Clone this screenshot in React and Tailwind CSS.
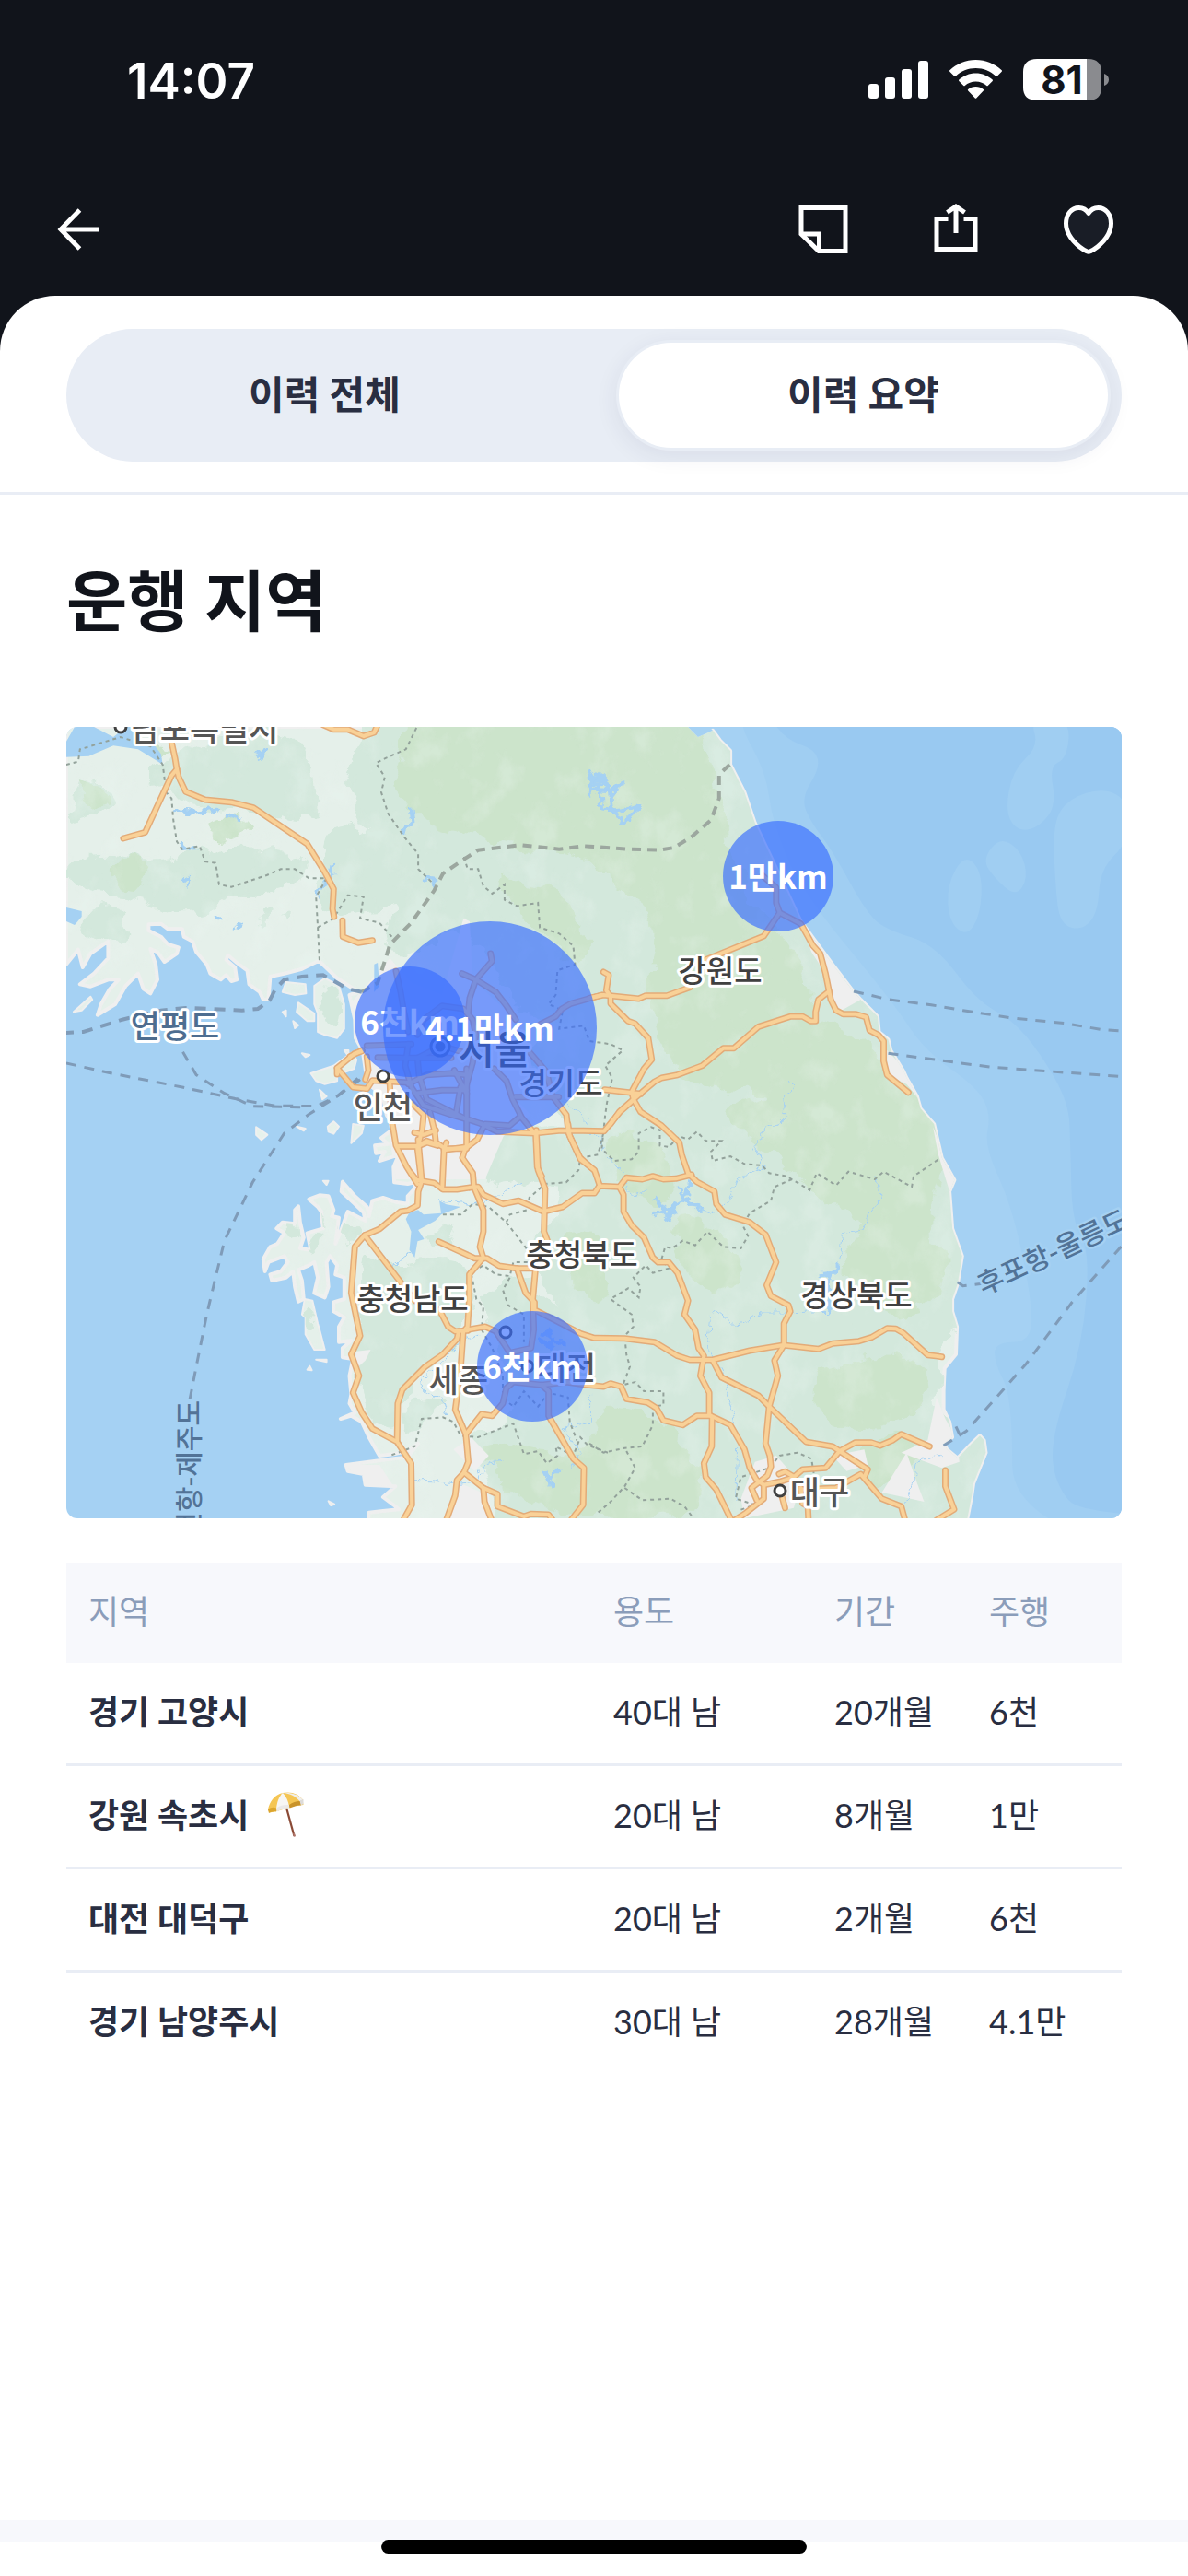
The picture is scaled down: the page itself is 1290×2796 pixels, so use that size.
import React from "react";

/* ---------- Map geometry ---------- */

// Survey sheets: each sheet has its own origin and unit size on the map.
const SX = 600 / 1568;
const S3 = 1 / 3;
const SHEETS = {
  nw: [-12, -9, SX, S3],
  ne: [568, -9, SX, S3],
  sw: [-12, 421, SX, S3],
  se: [568, 421, SX, S3],
  m: [308, 191, S3, S3],
};

// "nw 10,20 30,40 ne 5,5" -> [[x, y], ...] in map units
function points(text) {
  let sheet = SHEETS.nw;
  const out = [];
  text.split(/\s+/).forEach((token) => {
    if (!token) return;
    if (SHEETS[token]) {
      sheet = SHEETS[token];
      return;
    }
    const [x, y] = token.split(",").map(Number);
    out.push([
      Math.round((sheet[0] + x * sheet[2]) * 10) / 10,
      Math.round((sheet[1] + y * sheet[3]) * 10) / 10,
    ]);
  });
  return out;
}

const line = (text) => "M" + points(text).map((p) => p.join(" ")).join("L");
const area = (text) => line(text) + "Z";

// Closed outline whose corners are rounded through the edge midpoints
function blob(text) {
  const p = points(text);
  const mid = (a, b) => [(a[0] + b[0]) / 2, (a[1] + b[1]) / 2];
  const start = mid(p[p.length - 1], p[0]);
  let d = `M${start.join(" ")}`;
  p.forEach((pt, i) => {
    d += `Q${pt.join(" ")} ${mid(pt, p[(i + 1) % p.length]).join(" ")}`;
  });
  return d + "Z";
}

const LAND =
  "nw 31,27 31,800 65,752 78,810 100,765 150,725 150,780 110,830 70,865 100,872 150,850 180,850 155,880 130,930 120,965 170,930 200,870 235,830 250,880 270,895 290,850 285,800 270,750 290,760 310,792 345,765 350,745 320,735 300,710 265,690 265,670 300,668 320,685 360,685 365,710 390,725 400,760 430,800 440,830 470,850 485,835 500,855 515,850 510,810 485,785 490,770 515,795 545,820 550,865 580,890 590,915 605,915 610,840 650,830 700,815 748,788 800,845 860,890 835,900 850,980 852,1040 872,1080 885,1180 900,1200 930,1230 940,1290 " +
  "sw 950,20 955,50 925,75 945,95 907,100 910,125 935,120 920,150 975,130 960,170 962,220 1000,225 1020,220 1020,240 1000,265 1000,290 970,285 930,270 900,280 890,330 885,300 850,265 815,218 812,250 850,290 875,318 880,345 830,315 810,380 795,420 805,335 785,330 790,310 775,265 750,262 720,275 745,300 755,315 760,370 715,385 725,440 695,435 705,400 695,350 690,298 680,310 680,355 645,350 628,370 650,385 630,420 610,430 590,470 595,510 605,480 650,460 660,480 640,510 610,520 615,540 655,530 675,510 680,560 690,608 705,600 700,540 690,505 720,490 735,480 745,530 735,580 765,595 775,560 770,480 780,460 800,490 795,520 820,530 820,600 790,610 790,640 820,660 805,690 805,740 840,735 815,760 815,790 845,795 835,850 840,910 835,940 850,970 810,990 840,980 870,1000 890,1050 920,1110 960,1105 1000,1095 1030,1070 1000,1115 960,1120 825,1140 830,1160 875,1170 880,1205 965,1210 930,1245 965,1275 975,1285 930,1290 890,1295 888,1330 " +
  "se 1070,1330 1085,1240 1090,1200 1125,1100 1120,1060 1108,1045 1085,1070 1045,1118 1015,1090 1005,1070 1030,1050 1022,1000 1005,960 1005,900 1008,825 1040,780 1043,690 1030,640 1030,600 1045,550 1058,460 1030,370 1022,250 1036,212 1000,140 978,30 " +
  "ne 970,1310 940,1270 930,1230 900,1170 890,1145 855,1080 848,1045 822,1020 818,970 770,915 750,890 690,800 600,660 540,510 470,340 440,240 400,150 400,105 370,70 350,38 308,60 280,27";

const ISLANDS = [
  "nw 735,870 765,845 805,870 820,930 820,1010 800,1040 765,1030 745,1020 745,960 735,930",
  "nw 645,890 655,858 710,865 712,895 680,900",
  "nw 690,925 735,960 735,985 715,985 685,955",
  "nw 725,1155 790,1130 840,1088 855,1110 848,1140 800,1160 800,1180 765,1190 740,1180",
  "nw 52,955 100,905 105,915 75,950",
  "nw 750,1208 770,1230 758,1240",
  "sw 570,40 602,65 585,82 570,65",
  "sw 773,38 790,22 805,38 790,62 775,55",
  "sw 845,30 875,35 870,60 840,92",
  "sw 708,600 730,605 745,680 750,700 765,765 735,765 710,715 710,660 700,650",
  "sw 740,797 770,797 770,805",
  "sw 715,830 722,818 728,832",
  "sw 685,38 710,45 705,52",
  "sw 760,215 775,215 770,228",
  "sw 775,1258 792,1268 782,1272",
  "nw 645,955 655,950 655,970",
  "nw 675,985 690,998 680,1008",
  "nw 820,1080 832,1080 832,1100",
  "nw 700,1090 722,1095 710,1102",
];

const INLETS = [
  "nw 31,75 31,125 95,122 165,88 235,100 285,135 305,150 300,115 280,85 235,70 255,27 200,27 165,60 110,27 55,27",
  "nw 31,615 75,627 75,645 55,672 31,660",
  "sw 1110,292 1150,300 1095,325 1078,345 1030,375 1047,405 1028,412 1020,465 1005,440 1010,380 995,340 1005,318 1030,310 1045,325 1095,320 1090,280",
  "nw 905,800 915,795 920,870 905,890",
  "ne 280,27 308,60 350,38 340,27",
];

const LOWLAND_HILLS = [
  "nw 60,220 130,190 190,250 100,330 20,350",
  "nw 90,620 200,610 240,700 180,750 70,700",
  "nw 240,180 350,120 500,50 700,40 750,230 740,350 560,290 400,300",
  "nw 31,460 150,440 290,470 420,420 560,430 640,400 740,490 640,560 480,560 430,640 330,640 250,600 31,560",
  "nw 580,640 620,610 600,690",
  "nw 640,620 670,620 660,660",
  "nw 750,870 800,880 800,1010 760,1010",
  "sw 865,440 950,500 1050,480 1170,490 1200,560 1130,780 1000,870 970,1030 900,1020 850,900 870,700",
  "sw 810,330 870,380 830,420 800,420",
  "sw 750,290 780,310 770,370 745,360",
  "sw 720,390 760,380 740,450 715,440",
  "sw 650,380 690,350 690,420 640,420",
  "sw 1000,930 1110,910 1050,1000 980,1050",
  "sw 1060,380 1110,360 1150,400 1090,430",
  "sw 710,600 740,640 745,710 720,710",
];

const HIGHLAND =
  "nw 760,-60 900,-60 820,200 880,350 760,380 740,520 780,640 960,620 920,760 990,770 1130,690 1230,760 1320,960 1400,1000 1350,1100 1450,1320 " +
  "sw 1200,70 1190,160 1240,240 1360,220 1420,230 1430,330 1360,420 1380,520 1440,620 1290,520 1210,600 1240,720 1300,950 1180,1060 1210,1150 1300,1400 " +
  "se 380,1400 1180,1400 1200,1020 1080,1000 990,950 990,800 1120,600 1140,300 1100,100 ne 1020,1200 860,920 740,760 440,-60";

const FORESTS = [
  "nw 1020,-80 950,200 1020,330 1180,380 1300,430 1500,440 ne 40,520 200,640 160,800 180,980 300,1230 560,1200 se 350,0 560,150 700,330 980,460 960,300 1020,140 1000,0 ne 900,1180 740,1000 620,980 640,860 500,640 420,520 390,330 360,200 290,-80",
  "se 250,300 430,420 420,600 300,560 230,450",
  "se 700,380 980,330 1020,550 900,680 760,600",
  "se 580,850 900,760 980,900 900,1000 700,1040",
  "se 60,40 220,120 240,300 120,260 40,140",
  "se 740,1150 880,1000 940,1150 820,1230",
  "sw 1200,1050 1420,1130 1568,1020 1568,1330 1380,1290 1260,1200",
  "se 0,950 150,950 300,1100 330,1270 200,1320 0,1320",
  "nw 1210,480 1400,560 1520,640 1500,840 1380,700",
  "sw 1430,350 1568,400 1568,640 1450,560",
  "nw 60,220 120,200 170,250 80,310",
  "nw 180,450 270,470 250,560 150,540",
  "nw 420,330 520,320 580,350 500,400 430,380",
  "nw 300,60 340,120 260,110",
];

const URBAN = [
  "m 0,330 130,180 200,260 300,300 370,50 390,60 400,250 560,400 600,560 540,640 590,690 500,760 440,900 150,900 120,700 30,620",
  "se 470,1130 530,1110 600,1200 580,1280 440,1314 430,1250",
  "se 985,920 1010,990 1040,1050 1050,1130 1000,1150 885,1100 960,1060",
  "se 900,1100 930,1200 950,1260 870,1240 830,1230",
  "se 690,1110 780,1090 790,1140 730,1160",
  "ne 600,660 630,760 670,830 690,920 715,950 770,915 750,890",
  "ne 845,1080 845,1160 900,1190 935,1240 895,1140",
  "se 975,40 990,130 1022,250 1040,212",
  "sw 825,1140 880,1205 960,1210 920,1140",
  "sw 1150,1200 1230,1240 1240,1314 1110,1314",
  "sw 1130,1090 1180,1050 1230,1110 1190,1160",
  "sw 855,770 895,765 880,800 850,830",
];

const LAKES = [
  "nw 1515,160 1530,200 1520,250 nw 1530,215 1568,205 1545,180 nw 1568,230",
  "ne 0,180 15,230 60,235 100,205 ne 60,235 65,290 95,340 145,285 ne 65,300 35,292 ne 20,180 45,215",
  "nw 1010,290 1015,340 990,360 985,380",
  "nw 335,300 400,305 465,295",
  "nw 490,325 505,315 525,325",
  "nw 355,400 365,425 400,420",
  "nw 360,515 385,525 370,545",
  "nw 455,650 470,645",
  "nw 510,670 530,678",
  "nw 1045,520 1075,525 1080,560",
  "nw 575,110 600,100 575,130",
  "nw 740,580 750,560 785,500 790,470",
  "se 185,265 205,300 235,310 225,340 se 205,320 185,325 se 235,300 270,275 250,235 se 270,275 285,220 se 270,275 320,310",
  "se 650,520 690,515 705,490 se 690,515 680,545 680,640",
  "sw 1380,720 1400,700 1420,740 1450,745 sw 1400,740 1410,765 sw 1380,735 1395,750",
  "sw 1385,1155 1400,1190 1425,1160 sw 1400,1190 1410,1215",
];

const STREAMS = [
  "ne 570,1185 580,1205 550,1225 555,1280 545,1320",
  "se 555,0 545,25 500,40 470,110 495,170 420,210 390,290 360,325 320,310",
  "se 810,190 830,270 790,330 775,375 720,385 710,480",
  "se 680,640 560,645 500,645 410,685 360,640 345,650 335,760 385,860 405,960 420,1080 415,1250",
  "se 0,70 30,70 40,120 100,195 105,240 125,270 165,245",
  "sw 1090,275 1150,285 1190,295 1260,265 1320,220",
  "sw 1000,1190 1070,1190 1130,1203 1190,1195 1220,1140 1270,1125",
  "sw 1110,985 1100,930 1045,900 1040,860 1100,800 1150,735 1200,715",
  "se 1000,1108 925,1130 920,1200 895,1270",
  "sw 955,495 980,470 1010,455",
  "sw 1520,910 1520,1000 1440,1020 1490,1100 1460,1150",
  "m 690,640 770,700 775,725",
];

const ROADS = [
  "nw 330,77 340,130 345,165 350,190 370,238 425,264 500,272 562,290 715,408 765,500 790,555 787,620 791,645",
  "nw 345,165 330,185 255,370 193,390",
  "nw 815,658 816,710 860,730 900,722",
  "nw 760,20 790,35 830,35 875,57 905,45 915,20",
  "m 150,222 165,290 175,350 190,420",
  "m 458,165 463,190 410,250 390,310 385,360",
  "m 365,230 410,250 475,290 510,335 540,380",
  "m 820,300 720,328 690,345 670,370 620,395",
  "m 90,503 220,505 330,505",
  "m 55,465 130,463 200,460",
  "m 220,505 300,465 380,490",
  "m 220,430 240,380 300,335 370,345 400,380 410,430 400,520 375,610",
  "m 0,500 40,480",
  "m 55,500 60,545 50,575",
  "nw 870,1083 850,1090 800,1138 845,1200 885,1205 900,1178 1000,1185",
  "nw 800,1138 800,1158",
  "m 190,460 180,530 200,600 240,660 330,690 400,710 430,720",
  "m 130,590 135,700 150,790 185,860 220,915",
  "m 190,590 250,560 330,555 380,560",
  "m 215,620 300,610 380,610",
  "m 340,545 380,620",
  "m 360,600 345,690",
  "m 220,505 225,560 250,640 370,700",
  "m 380,540 380,800",
  "m 200,650 240,690 235,740 220,800 232,900",
  "m 260,680 275,740 280,780 310,800 375,800 415,770 440,720 520,725 550,700",
  "m 430,720 480,745 600,750 680,742 760,742 828,743 880,680 920,645",
  "m 470,540 510,580 530,640 560,700 605,755 610,860 625,890",
  "m 540,632 680,632",
  "m 580,480 640,550 660,630 705,690 712,750 750,830 795,870",
  "m 830,608 948,622",
  "m 210,748 240,755 280,740",
  "m 155,793 220,793 250,775 280,785",
  "ne 40,825 55,835 48,885 60,905",
  "ne 0,910 40,900 140,912 160,902 220,902 285,875 330,785 495,708 540,632 530,600 530,550 490,510",
  "ne 540,632 600,668 635,740 655,765 670,830 685,915 700,950 720,962 755,962 785,972 795,1015 820,1030 835,1050 835,1115 845,1160 905,1217",
  "ne 680,888 650,915 642,955 642,985 628,985 605,970 570,970 480,1003 410,1073 380,1073 320,1130 250,1160 205,1170 185,1182 125,1240 85,1280 60,1320",
  "ne 60,905 60,928 110,985 130,993 167,1040 177,1110 155,1140 120,1215 125,1240 145,1280 205,1325 se 255,90 262,130 280,190 305,218 355,250 360,290 385,325 455,350 500,390 530,480 503,555 515,590 565,620 570,640 552,680 552,750 525,800 535,850 510,950 500,1070 512,1110 515,1145 505,1175 460,1215 475,1255",
  "sw 975,102 1030,102 1055,90 1085,100",
  "sw 1030,80 1040,215 1030,250 1028,295 1000,312 980,315 920,372 878,392 850,430 840,580 865,720 840,780 862,850 845,905 870,970 900,1022 970,1065 1010,1135 1012,1270 985,1325",
  "sw 1010,190 1025,212 1075,222 1100,243 1140,243 1190,235 1200,235 1215,260 1270,290 1315,280 1385,315 1440,300 1495,255 1530,255 1545,230 se 28,232 85,235 105,205 150,210 180,200 210,210 245,208 290,195",
  "sw 1110,90 1103,115 1098,240",
  "sw 1103,115 1165,105 1155,140 1185,190 1188,235 1215,310 1215,380 1205,430 1215,465",
  "sw 878,392 1020,605",
  "sw 1090,635 1115,690 1135,705 1170,703",
  "sw 1088,413 1190,467 1225,467 1260,492 1310,500 1365,500",
  "sw 1215,465 1175,520 1175,600 1170,690 1158,705 1150,830 1135,960 1165,1040 1172,1130 1160,1165 1140,1190 1135,1240 1108,1325",
  "sw 1170,700 1220,690 1250,705 1290,775 1350,760 1358,700 1355,600 1362,510",
  "sw 1310,500 1335,580 1360,610 1360,635 1420,670 1490,712 1530,727 se 20,727 100,728 185,740 250,785 285,798 350,798 455,768 550,750 650,763 690,745 765,737 800,725 845,695 870,697 890,710 960,782 1000,788",
  "sw 1145,705 1140,730 1100,780 1050,820 985,895 972,940 970,1060",
  "sw 1165,1040 1210,975 1240,980 1270,940 1280,890 1300,870 1380,880 1400,900 1400,980 1470,1120 1500,1150 1498,1270 1460,1325",
  "sw 1380,880 1450,870 1510,880 1555,885 se 40,885 60,875 90,885 105,925 165,937 190,955 210,995 265,1010 305,980 345,980 400,1010 440,1090 455,1150 475,1190",
  "sw 1160,1165 1215,1215 1218,1260 1240,1325",
  "sw 1215,1215 1255,1235 1255,1275 1330,1308 1350,1300 1400,1302 1415,1325",
  "sw 1365,50 1370,180 1390,240 1387,380 1400,420",
  "sw 1455,30 1460,70 1490,145 1530,180 1545,230",
  "se 85,235 97,260 97,315 120,360 155,400 180,465 195,480 225,480 250,515 280,605 270,650 300,700 310,760 325,785 315,850 340,905 340,975 348,985 347,1080 325,1135 330,1180 360,1220 405,1325",
  "se 350,800 375,855 480,915 510,950 615,1065 690,1080 710,1095 790,1155 780,1180",
  "se 965,1080 885,1040 860,1060 825,1077 800,1067 755,1067 710,1095 670,1150 605,1155 580,1180 540,1195 495,1205 475,1190",
  "se 538,1170 555,1162 580,1178",
  "se 495,1205 495,1250 440,1300 405,1325",
  "se 540,1215 555,1280",
  "se 600,1215 605,1265 620,1275 622,1325",
  "se 600,1220 700,1215 770,1170 830,1250 885,1275 897,1325",
  "se 1010,1158 1010,1210 1035,1285 985,1320",
];

const PROVINCES = [
  "nw 1025,30 995,100 935,130 910,145 935,190 925,240 945,310 990,385 1030,440 1030,490 1075,540",
  "nw 31,150 65,140 70,100 185,60 270,90 305,150 315,240 330,260 335,330 345,400 360,425 410,415 425,465 455,470 465,540 500,548 600,510 640,490 680,490 720,520 765,520",
  "nw 770,520 740,580 745,680 750,790",
  "nw 745,680 790,650 830,575 875,580 865,650 920,665 955,710",
  "nw 1160,450 1170,490 1200,490 1215,545 1240,570 1275,540 1275,590 1310,610 1370,600 1375,680 1430,700 1470,740 1475,800 1425,820 1420,900 1400,930 1440,950 1430,1010 1500,1000 ne 0,1050 60,1060 95,1080 45,1130 65,1170 50,1250 45,1290 se 35,110 70,150 120,145 140,120 140,60 175,40 200,50 200,100 225,105 255,70 280,80 305,55 330,85 375,85 345,120 350,150 400,135 440,160 490,165 510,190 560,200 625,245 645,190 700,230 735,185 810,210 835,185 915,235 920,200 995,142",
  "se 575,210 525,235 515,280 455,320 435,360 450,395 430,435 380,430 335,380 300,425 265,410 235,435 215,430 205,470 225,500 180,515 160,490 125,530 145,560 140,595 110,565 60,600 120,650 125,690 100,720 105,780 115,820 95,880 130,870 155,900 210,900 210,945 180,950 180,1010 150,1080 100,1085 40,1100 0,1070",
  "se 105,1095 130,1150 100,1210 60,1260 20,1300",
  "se 100,1215 150,1255 230,1250 270,1275 295,1314",
  "se 640,1190 630,1120 590,1100 540,1110 510,1150 430,1180 415,1250 470,1270 420,1290",
  "sw 1100,325 1150,325 1185,290 1230,300 1280,350 1340,440",
  "sw 1280,350 1290,325 1340,310 1345,270 1390,225 1450,220 1485,180 1490,140 1540,130 1560,40",
  "sw 1340,480 1300,480 1290,525 1250,520 1215,490 1180,515 1195,600 1215,625 1210,700 1240,760 1270,850 1270,920 1300,950 1330,900 1370,950 1400,905 1455,920 1460,1000 1480,1060",
  "sw 1290,530 1270,570 1285,620 1330,650 1330,740",
  "sw 955,1108 1020,1080 1040,990 1100,985 1130,1000 1150,1045 1200,1050 1300,1005 1330,1105 1370,1095 1395,1135 1425,1110 1420,1080 1470,1110 1490,1050 1510,1075 1568,1100",
];

const DMZ =
  "ne 398,150 368,182 368,260 345,330 290,385 240,420 200,428 110,425 0,416 nw 1500,415 1430,425 1320,412 1200,428 1150,465 1100,505 1075,560 1010,665 950,735 935,790 915,860 870,890";

const SEA_BORDER =
  "nw 870,890 830,880 760,835 700,840 650,850 625,880 608,918 575,945 530,950 440,945 370,942 300,950 190,980 80,1020 31,1023";

const FERRIES = [
  "nw 31,1122 160,1155 360,1200 520,1240 620,1260 740,1262 800,1230 865,1165",
  "nw 362,1085 400,1160 480,1220 560,1262 700,1265",
  "nw 865,1175 800,1230 718,1290 sw 650,60 560,220 480,410 430,650 400,820 382,925",
  "ne 750,888 850,915 970,932 1060,950 1200,975 1350,992 1450,1012 1520,1018",
  "ne 848,1090 960,1107 1140,1135 1300,1148 1520,1166",
  "se 1005,1077 1070,1030 1240,810 1370,610 1520,415",
  "se 1045,545 1060,557 1115,550",
  "se 1040,1015 1050,1040",
];

const LABELS = [
  { text: "경기도", x: 537, y: 399 },
  { text: "강원도", x: 710, y: 277 },
  { text: "충청북도", x: 560, y: 585 },
  { text: "충청남도", x: 376, y: 633 },
  { text: "경상북도", x: 858, y: 629 },
];

const CITY_LABELS = [
  { text: "인천", x: 344, y: 426 },
  { text: "세종", x: 426, y: 722 },
  { text: "대전", x: 543, y: 709 },
  { text: "대구", x: 818, y: 844 },
  { text: "남포특별시", x: 150, y: 15 },
];

const CITY_DOTS = [
  [344, 379],
  [775, 829],
  [477, 657],
  [501, 694],
  [59, 0],
];

const BUBBLES = [
  { text: "1만km", x: 773, y: 162, r: 60 },
  { text: "6천km", x: 373, y: 320, r: 60 },
  { text: "4.1만km", x: 460, y: 327, r: 116 },
  { text: "6천km", x: 506, y: 694, r: 60 },
];

function RegionMap() {
  return (
    <svg
      viewBox="0 0 1146 859"
      role="img"
      aria-label="운행 지역 지도"
      className="block w-full rounded-xl font-['Noto_Sans_CJK_KR',sans-serif]"
    >
      <defs>
        <clipPath id="land">
          <path d={area(LAND)} />
          {ISLANDS.map((d) => (
            <path key={d} d={area(d)} />
          ))}
        </clipPath>
        <filter id="rough" x="-5%" y="-5%" width="110%" height="110%">
          <feTurbulence type="fractalNoise" baseFrequency="0.035" numOctaves="4" seed="4" />
          <feDisplacementMap in="SourceGraphic" scale="30" xChannelSelector="R" yChannelSelector="G" />
        </filter>
        <filter id="jagged" x="-5%" y="-5%" width="110%" height="110%">
          <feTurbulence type="fractalNoise" baseFrequency="0.12" numOctaves="2" seed="9" />
          <feDisplacementMap in="SourceGraphic" scale="12" xChannelSelector="R" yChannelSelector="G" />
        </filter>
        <filter id="relief" x="0" y="0" width="100%" height="100%">
          <feTurbulence type="fractalNoise" baseFrequency="0.03 0.022" numOctaves="5" seed="11" />
          <feColorMatrix
            values="0 0 0 0 0.84
                    0 0 0 0 0.92
                    0 0 0 0 0.88
                    4 0 0 0 -2"
          />
        </filter>
      </defs>

      <rect width="1146" height="859" fill="#a5d1f3" />
      <path
        fill="#a0cef2"
        d={blob(
          "ne 425,20 500,170 520,340 600,560 860,920 950,1080 1100,1200 1140,1290 se 1120,100 1200,300 1255,600 1255,740 1150,740 1150,810 1200,920 1200,1360 2200,1560 ne 2200,-900 440,-60"
        )}
      />
      <path
        fill="#99c9f1"
        d={blob(
          "ne 500,-20 560,70 640,100 655,160 600,260 630,340 690,430 790,640 850,690 980,735 1100,920 1200,980 1280,1090 1360,1250 se 1365,100 1370,350 1420,440 1400,750 1310,1050 1320,1200 1400,1310 2200,1310 ne 2200,-900 500,-200"
        )}
      />
      <g fill="#a0cef2">
        <path d={blob("ne 1250,0 1275,90 1200,170 1180,310 1220,370 1280,350 1325,280 1305,155 1355,130 1365,0")} />
        <path d={blob("ne 1530,400 1450,490 1443,630 1400,690 1335,670 1322,540 1315,340 1360,260 1460,225 1530,270")} />
        <path d={blob("ne 1065,440 1115,500 1110,640 1070,710 1020,660 1015,540")} />
        <path d={blob("ne 1165,385 1225,430 1245,520 1210,580 1150,520 1115,460")} />
      </g>

      <g stroke="#efefef" strokeWidth="4" strokeLinejoin="round" fill="#e5f0ea">
        <path d={area(LAND)} />
        {ISLANDS.map((d) => (
          <path key={d} d={area(d)} strokeWidth="2" />
        ))}
      </g>
      <g clipPath="url(#land)">
        <g filter="url(#rough)">
          <g fill="#d3e8dc">
            {LOWLAND_HILLS.map((d) => (
              <path key={d} d={blob(d)} />
            ))}
            <path d={area(HIGHLAND)} />
          </g>
          <g fill="#cce4cb">
            {FORESTS.map((d) => (
              <path key={d} d={blob(d)} />
            ))}
          </g>
        </g>
        <rect width="1146" height="859" filter="url(#relief)" opacity="0.25" />
        <g fill="#efefef">
          {URBAN.map((d) => (
            <path key={d} d={area(d)} />
          ))}
        </g>
      </g>
      <g fill="#a5d1f3">
        {INLETS.map((d) => (
          <path key={d} d={area(d)} />
        ))}
      </g>
      <g fill="none" stroke="#a5d1f3" strokeLinejoin="round" filter="url(#jagged)">
        {LAKES.map((d) => (
          <path key={d} d={line(d)} strokeWidth="4" />
        ))}
        {STREAMS.map((d) => (
          <path key={d} d={line(d)} strokeWidth="1" />
        ))}
      </g>

      <g fill="none" stroke="#93a29b" strokeWidth="2" strokeDasharray="4 4">
        {PROVINCES.map((d) => (
          <path key={d} d={line(d)} />
        ))}
      </g>
      <path d={line(DMZ)} fill="none" stroke="#9ca79f" strokeWidth="4" strokeDasharray="10 7" />
      <g fill="none" stroke="#7f9bb8">
        <path d={line(SEA_BORDER)} strokeWidth="4" strokeDasharray="12 9" />
        {FERRIES.map((d) => (
          <path key={d} d={line(d)} strokeWidth="3" strokeDasharray="11 9" />
        ))}
      </g>

      <g fill="none" strokeLinecap="round" strokeLinejoin="round">
        <g stroke="#e3ab78" strokeWidth="7">
          {ROADS.map((d) => (
            <path key={d} d={line(d)} />
          ))}
        </g>
        <g stroke="#f9d197" strokeWidth="4">
          {ROADS.map((d) => (
            <path key={d} d={line(d)} />
          ))}
        </g>
      </g>

      <g fill="#ffffff" stroke="#404040" strokeWidth="3">
        {CITY_DOTS.map(([x, y]) => (
          <circle key={x} cx={x} cy={y} r="6" />
        ))}
        <circle cx="406" cy="347" r="10" />
        <circle cx="406" cy="347" r="4" fill="#404040" />
      </g>

      <g
        fontWeight="500"
        textAnchor="middle"
        stroke="#ffffff"
        strokeWidth="6"
        strokeLinejoin="round"
        paintOrder="stroke"
      >
        <g fontSize="33" fill="#404040">
          {LABELS.map((l) => (
            <text key={l.text} x={l.x} y={l.y}>
              {l.text}
            </text>
          ))}
        </g>
        <g fontSize="35" fill="#555555">
          {CITY_LABELS.map((l) => (
            <text key={l.text} x={l.x} y={l.y}>
              {l.text}
            </text>
          ))}
          <text x="118" y="338" fill="#4d6d90">
            연평도
          </text>
        </g>
        <text x="465" y="366" fontSize="43" fill="#333333">
          서울
        </text>
      </g>
      <g
        fontSize="30"
        fontWeight="500"
        fill="#527397"
        stroke="#a5d1f3"
        strokeWidth="5"
        strokeLinejoin="round"
        paintOrder="stroke"
      >
        <text transform="translate(144 731) rotate(-90)" textAnchor="end">
          인천항-제주도
        </text>
        <text transform="translate(996 617) rotate(-25)">후포항-울릉도</text>
      </g>

      <g fontSize="35" fontWeight="700" textAnchor="middle">
        {BUBBLES.map((b) => (
          <g key={b.x}>
            <circle cx={b.x} cy={b.y} r={b.r} fill="#386dff" fillOpacity="0.66" />
            <text x={b.x} y={b.y + 14} fill="#ffffff">
              {b.text}
            </text>
          </g>
        ))}
      </g>
    </svg>
  );
}

/* ---------- Status bar ---------- */

function StatusBar() {
  return (
    <div className="flex h-44 items-center justify-between pr-[86px] pl-[138px]">
      <time className="font-['Inter',sans-serif] text-[53px] leading-none font-semibold">14:07</time>
      <div className="flex items-center gap-[23px] pb-[3px]">
        <svg width="65" height="45" viewBox="0 0 65 45" fill="#fff" role="img" aria-label="신호 세기">
          <rect x="0" y="27" width="11" height="16" rx="3" />
          <rect x="18" y="20" width="11" height="23" rx="3" />
          <rect x="36" y="11" width="11" height="32" rx="3" />
          <rect x="54" y="2" width="11" height="41" rx="3" />
        </svg>
        <svg width="57" height="45" viewBox="0 0 57 45" fill="#fff" role="img" aria-label="와이파이">
          <path d="M28.5 1C17.6 1 7.600 5.300.3 12.300c-.4.4-.4 1 0 1.400l5 5c.4.4 1 .4 1.400 0C12.400 13.200 20.100 10 28.500 10s16.100 3.200 21.800 8.700c.4.4 1 .4 1.400 0l5-5c.4-.4.4-1 0-1.400C49.400 5.300 39.400 1 28.500 1Z" />
          <path d="M28.500 15.500c-7 0-13.400 2.700-18.200 7.100-.4.4-.4 1 0 1.400l5 5c.4.400 1 .400 1.400 0 3.100-2.800 7.300-4.500 11.800-4.500s8.700 1.700 11.800 4.500c.4.4 1 .4 1.400 0l5-5c.4-.4.4-1 0-1.400-4.800-4.400-11.200-7.100-18.200-7.100Z" />
          <path d="M28.500 30c-3.200 0-6.100 1.100-8.300 3-.5.4-.5 1 0 1.500l7.600 7.900c.4.4 1 .4 1.400 0l7.600-7.900c.5-.5.5-1.100 0-1.500-2.200-1.900-5.100-3-8.300-3Z" />
        </svg>
        <svg width="93" height="45" viewBox="0 0 93 45" role="img" aria-label="배터리 81%">
          <path fill="#8a8b8f" d="M69 0h2c9 0 14 5 14 14v17c0 9-5 14-14 14h-2Z" />
          <path fill="#fff" d="M69 0H15C5 0 0 5 0 14v17c0 9 5 14 15 14h54Z" />
          <path fill="#8a8b8f" d="M88 16c3 1 5 3.500 5 6.500S91 28 88 29Z" />
          <text
            x="42"
            y="38"
            fontSize="42"
            fontWeight="700"
            textAnchor="middle"
            fill="#11141b"
            className="font-['Inter',sans-serif]"
          >
            81
          </text>
        </svg>
      </div>
    </div>
  );
}

/* ---------- Toolbar ---------- */

function IconButton({ label, children }) {
  return (
    <button type="button" aria-label={label} className="size-[72px]">
      <svg viewBox="0 0 72 72" className="size-full" fill="none" stroke="#fff" strokeWidth="5">
        {children}
      </svg>
    </button>
  );
}

function Toolbar() {
  return (
    <nav className="flex h-[145px] items-center justify-between pr-[72px] pl-12">
      <IconButton label="뒤로">
        <path d="M38.500 15 18 36l20.500 21M18 36h41" />
      </IconButton>
      <div className="flex gap-[72px]">
        <IconButton label="메모">
          <path d="M12 12.500h48v47H31L12 41Z" />
          <path d="M12 41h19.500v18.500" />
        </IconButton>
        <IconButton label="공유">
          <path d="M27.500 24.500H15v33h42v-33H44.500" />
          <path d="M36 40V12M26.500 17.500 36 11l9.500 6.500" />
        </IconButton>
        <IconButton label="찜하기">
          <path
            fill="#191d26"
            strokeLinejoin="round"
            d="M36 18.500C33.500 14.500 29.800 12.500 25.500 12.500 17.500 12.500 11.500 19.500 11.500 29.500c0 14.500 14.500 26.500 22.500 30.300 1.400.6 2.600.6 4 0C46 56 60.500 44 60.500 29.500c0-10-6-17-14-17-4.300 0-8 2-10.500 6Z"
          />
        </IconButton>
      </div>
    </nav>
  );
}

/* ---------- Records ---------- */

const ROWS = [
  { region: "경기 고양시", use: "40대 남", period: "20개월", distance: "6천" },
  { region: "강원 속초시", use: "20대 남", period: "8개월", distance: "1만", beach: true },
  { region: "대전 대덕구", use: "20대 남", period: "2개월", distance: "6천" },
  { region: "경기 남양주시", use: "30대 남", period: "28개월", distance: "4.1만" },
];

function Parasol() {
  return (
    <svg width="42" height="50" viewBox="0 0 42 50" role="img" aria-label="해변" className="ml-5 shrink-0">
      <path d="M21 17 29.500 48" stroke="#8a4a36" strokeWidth="2.200" />
      <path d="M29 45 30 48.500" stroke="#b0756a" strokeWidth="2" />
      <path d="M1 19C3 10 8 3 17 1c9-2 17 1 21.500 7l1 6-9 1-20 6-8 1.500Z" fill="#f5c654" />
      <path d="M17 1c-4 4-6.500 10-7 18l14-3.500C23 10 21 5 17 1Z" fill="#f7f6f4" />
      <path d="M17 1c6-1 16 1 21 6.500l.5 2-3 .5C31 5 25 1.500 17 1Z" fill="#f0efed" />
      <path d="M1 19c3-2.500 6-3 9-1.500v4c-3-.5-6 .5-8 1.500Z" fill="#dba52e" />
      <path d="M10 17.500c4-3 9-4 14-3.500l.5 3.500c-5 0-9 1.500-14 4Z" fill="#ebe9e8" />
      <path d="M24 14c4-3 9-4.500 12-4l1 4.500c-3-.5-8 1-12.500 3Z" fill="#c9932a" />
      <path d="M35.500 9.500 39.500 8v5l-2.700 1.500Z" fill="#dddbd9" />
    </svg>
  );
}

function RecordTable() {
  return (
    <table className="mt-12 w-full table-fixed border-separate border-spacing-0 text-left text-[36px] leading-[54px] text-[#292e41]">
      <colgroup>
        <col />
        <col className="w-[240px]" />
        <col className="w-[168px]" />
        <col className="w-[168px]" />
      </colgroup>
      <thead>
        <tr className="h-[109px] bg-[#f7f8fc] text-[#8b9dba] *:pb-1 *:pl-6 *:font-normal">
          <th scope="col">지역</th>
          <th scope="col">용도</th>
          <th scope="col">기간</th>
          <th scope="col">주행</th>
        </tr>
      </thead>
      <tbody>
        {ROWS.map((r) => (
          <tr
            key={r.region}
            className="h-28 *:border-b-[3px] *:border-[#e9edf5] *:pb-1 *:pl-6 last:*:border-transparent"
          >
            <th scope="row" className="font-bold">
              <span className="flex items-center">
                {r.region}
                {r.beach && <Parasol />}
              </span>
            </th>
            <td>{r.use}</td>
            <td>{r.period}</td>
            <td>{r.distance}</td>
          </tr>
        ))}
      </tbody>
    </table>
  );
}

export default function App() {
  return (
    <div className="flex min-h-screen flex-col bg-white font-['Lato','Noto_Sans_CJK_KR',sans-serif]">
      <div className="bg-[#11141b] text-white">
        <StatusBar />
        <Toolbar />
        <div className="rounded-t-[60px] bg-white px-[72px] pt-9 pb-[33px]">
          <div
            role="tablist"
            className="grid h-36 grid-cols-2 gap-[54px] rounded-full bg-[#e8edf5] p-[15px] text-[42px] font-bold text-[#292e41]"
          >
            <button type="button" role="tab" aria-selected="false" className="rounded-full pb-0.5">
              이력 전체
            </button>
            <button
              type="button"
              role="tab"
              aria-selected="true"
              className="rounded-full bg-white pb-0.5 shadow-[0_0_0_3px_#e8edf5,0_6px_24px_4px_rgba(41,46,80,0.07)]"
            >
              이력 요약
            </button>
          </div>
        </div>
      </div>
      <main className="grow border-t-[3px] border-[#e9edf5] px-[72px] pb-24">
        <h1 className="pt-15 pb-21 text-[72px] leading-[108px] font-bold text-[#11141b]">운행 지역</h1>
        <RegionMap />
        <RecordTable />
      </main>
      <footer>
        <div className="h-6 bg-[#f7f8fc]" />
        <div className="mx-auto -mt-0.5 mb-6 h-[15px] w-[462px] rounded-full bg-black" />
      </footer>
    </div>
  );
}
